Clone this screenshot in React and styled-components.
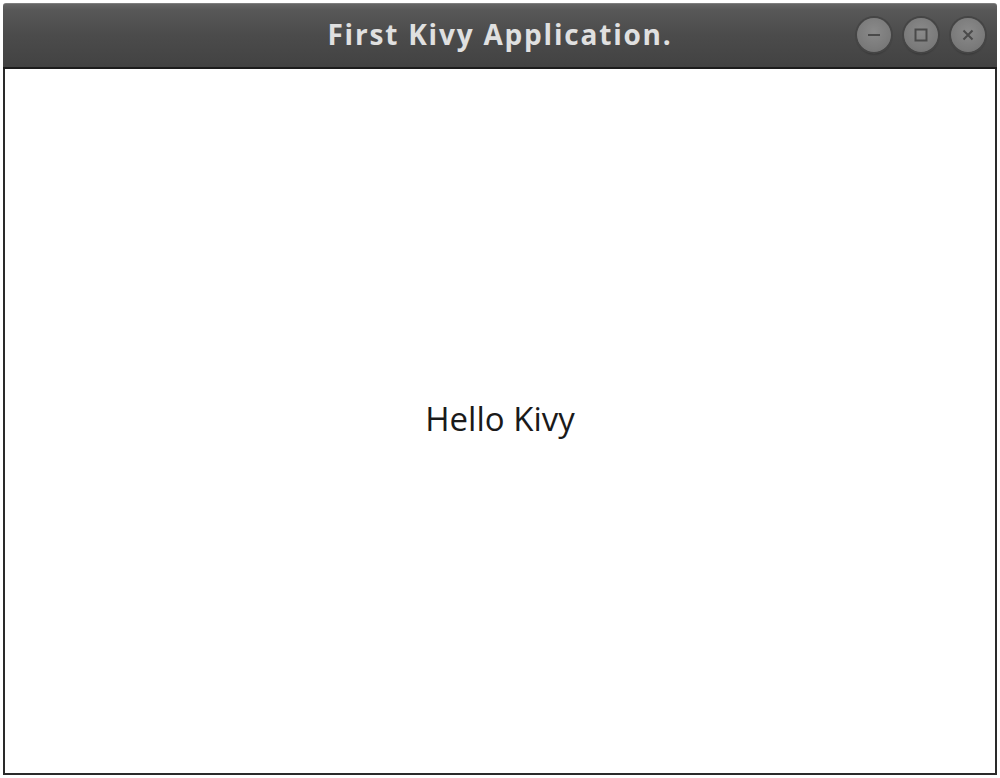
import styled, { createGlobalStyle } from "styled-components";

const Global = createGlobalStyle`
    html, body {
        margin: 0;
        padding: 0;
        background: #fff;
    }
`;

const App = () => {
    return (
        <>
            <Global />
            <Page>
                <Window>
                    <TitleBar>
                        <Title>First Kivy Application.</Title>
                        <Controls>
                            <WinButton aria-label="minimize">
                                <svg width="18" height="18" viewBox="0 0 18 18">
                                    <line x1="3" y1="9" x2="15" y2="9" stroke="#4a4a4a" strokeWidth="2" />
                                </svg>
                            </WinButton>
                            <WinButton aria-label="maximize">
                                <svg width="18" height="18" viewBox="0 0 18 18">
                                    <rect x="3.5" y="3.5" width="11" height="11" fill="none" stroke="#4a4a4a" strokeWidth="2" />
                                </svg>
                            </WinButton>
                            <WinButton aria-label="close">
                                <svg width="18" height="18" viewBox="0 0 18 18">
                                    <path d="M4.5 4.5 L13.5 13.5 M13.5 4.5 L4.5 13.5" stroke="#4a4a4a" strokeWidth="2" />
                                </svg>
                            </WinButton>
                        </Controls>
                    </TitleBar>
                    <Body>
                        <Label>Hello Kivy</Label>
                    </Body>
                </Window>
            </Page>
        </>
    );
}

const Page = styled.div`
    width: 1000px;
    height: 778px;
    padding: 3px;
    box-sizing: border-box;
`;

const Window = styled.div`
    display: flex;
    flex-direction: column;
    width: 994px;
    height: 772px;
`;

const TitleBar = styled.div`
    position: relative;
    height: 66px;
    box-sizing: border-box;
    display: flex;
    align-items: center;
    justify-content: center;
    padding-bottom: 4px;
    background: linear-gradient(to bottom, #656565 0px, #585858 6px, #4b4b4b 32px, #424242 64px);
    border-top: 1px solid #7e7e7e;
    border-bottom: 2px solid #1c1c1c;
    border-radius: 3px 3px 0 0;
`;

const Title = styled.h1`
    margin: 0;
    font-family: "Open Sans", "DejaVu Sans", sans-serif;
    font-weight: 700;
    font-size: 28px;
    letter-spacing: 1.8px;
    color: #e0e0e0;
`;

const Controls = styled.div`
    position: absolute;
    right: 12px;
    top: 14px;
    display: flex;
    gap: 13px;
`;

const WinButton = styled.button`
    width: 34px;
    height: 34px;
    border-radius: 50%;
    border: none;
    padding: 0;
    display: flex;
    align-items: center;
    justify-content: center;
    background: radial-gradient(circle at 50% 40%, #8a8a8a 0%, #7a7a7a 65%, #6b6b6b 100%);
    box-shadow: 0 0 0 2px #454545, 0 2px 2px rgba(0,0,0,0.45);
`;

const Body = styled.div`
    flex: 1;
    display: flex;
    align-items: center;
    justify-content: center;
    background: #fff;
    border: 2px solid #2a2a2a;
    border-top: none;
`;

const Label = styled.span`
    font-family: "Open Sans", "DejaVu Sans", sans-serif;
    font-size: 33px;
    color: #1a1a1a;
    margin-top: -6px;
`;

export default App;
